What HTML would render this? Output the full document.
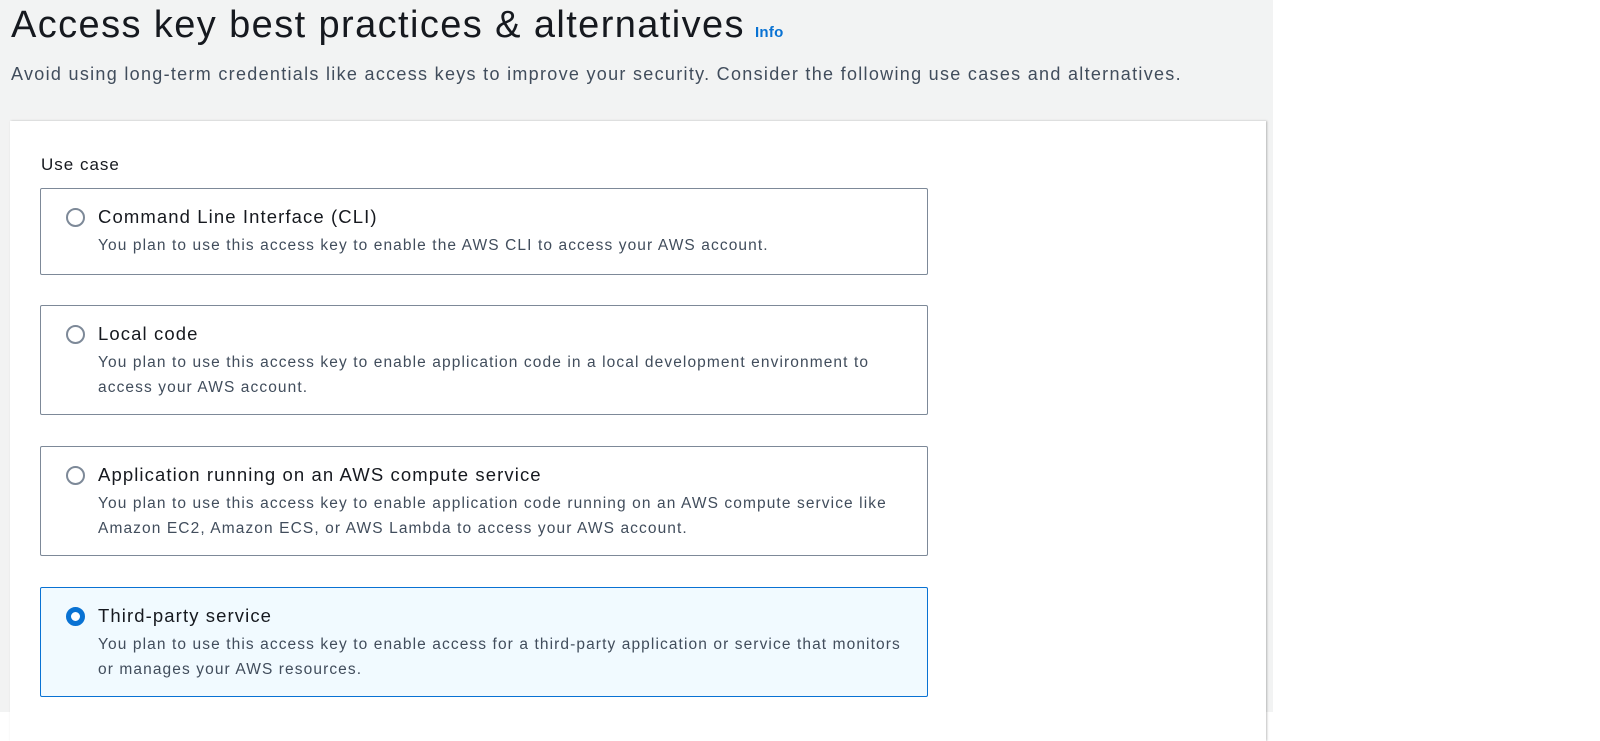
<!DOCTYPE html>
<html><head><meta charset="utf-8"><style>
*{margin:0;padding:0;box-sizing:border-box}
body{width:1600px;height:712px;background:#fff;font-family:"Liberation Sans",sans-serif;overflow:hidden;position:relative;color:#16191f}
.bg{position:absolute;left:0;top:0;width:1273px;height:712px;background:#f2f3f3}
h1{position:absolute;left:11px;top:4px;font-size:38px;font-weight:400;letter-spacing:1.4px;white-space:nowrap}
h1 span{font-size:15px;font-weight:700;color:#0972d3;margin-left:10px;letter-spacing:0.3px}
.sub{position:absolute;left:11px;top:64px;font-size:18px;letter-spacing:1.3px;color:#414d5c;white-space:nowrap}
.panel{position:absolute;left:10px;top:121px;width:1256px;height:620px;background:#fff;box-shadow:1px 0 2px rgba(0,0,0,.25)}
.lbl{position:absolute;left:41px;top:155px;font-size:17px;letter-spacing:1px}
.card{position:absolute;left:40px;width:888px;border:1px solid #7d8998;border-radius:2px;background:#fff}
.card.sel{background:#f1faff;border-color:#0972d3}
.r{position:absolute;left:25px;top:19px;width:19px;height:19px;border:2px solid #7d8998;border-radius:50%}
.sel .r{border:5px solid #0972d3;background:#fff}
.t{position:absolute;left:57px;top:17px;font-size:18.5px;letter-spacing:1.1px;white-space:nowrap}
.d{position:absolute;left:57px;top:45px;font-size:15.5px;letter-spacing:1.1px;color:#414d5c;line-height:24.5px;white-space:nowrap}
</style></head><body>
<div class="bg"></div>
<h1>Access key best practices &amp; alternatives<span>Info</span></h1>
<div class="sub">Avoid using long-term credentials like access keys to improve your security. Consider the following use cases and alternatives.</div>
<div class="panel"></div>
<div class="lbl">Use case</div>
<div class="card" style="top:188px;height:87px"><div class="r"></div><div class="t">Command Line Interface (CLI)</div><div class="d">You plan to use this access key to enable the AWS CLI to access your AWS account.</div></div>
<div class="card" style="top:305px;height:110px"><div class="r"></div><div class="t">Local code</div><div class="d">You plan to use this access key to enable application code in a local development environment to<br>access your AWS account.</div></div>
<div class="card" style="top:446px;height:110px"><div class="r"></div><div class="t">Application running on an AWS compute service</div><div class="d">You plan to use this access key to enable application code running on an AWS compute service like<br>Amazon EC2, Amazon ECS, or AWS Lambda to access your AWS account.</div></div>
<div class="card sel" style="top:587px;height:110px"><div class="r"></div><div class="t">Third-party service</div><div class="d">You plan to use this access key to enable access for a third-party application or service that monitors<br>or manages your AWS resources.</div></div>
</body></html>
